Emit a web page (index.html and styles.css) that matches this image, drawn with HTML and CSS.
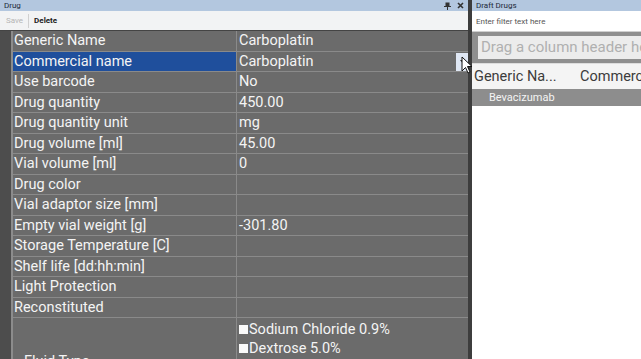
FILE: index.html
```html
<!DOCTYPE html>
<html lang="en">
<head>
    <meta charset="UTF-8">
    <title>Drug</title>
    <link rel="stylesheet" href="styles.css">
</head>
<body>
    <div class="app">
        <div class="drug-pane">
            <div class="pane-title">
                <span>Drug</span>
                <span class="pane-icons">
                    <svg width="7" height="8" viewBox="0 0 7 8"><rect x="1.5" y="0.5" width="4" height="4" fill="#333"/><rect x="0" y="4" width="7" height="1" fill="#333"/><rect x="3" y="5" width="1" height="3" fill="#333"/></svg>
                    <svg width="7" height="7" viewBox="0 0 7 7"><path d="M1 1L6 6M6 1L1 6" stroke="#333" stroke-width="1.6"/></svg>
                </span>
            </div>
            <div class="toolbar">
                <span class="tool disabled">Save</span>
                <span class="tool-sep"></span>
                <span class="tool">Delete</span>
            </div>
            <div class="grid">
                <div class="gutter"></div>
                <div class="rows">
                    <div class="row"><div class="name">Generic Name</div><div class="value">Carboplatin</div></div>
                    <div class="row selected"><div class="name">Commercial name</div><div class="value">Carboplatin<span class="drop-btn"><svg width="5" height="3" viewBox="0 0 5 3"><path d="M0 0H5L2.5 3Z" fill="#333"/></svg></span></div></div>
                    <div class="row"><div class="name">Use barcode</div><div class="value">No</div></div>
                    <div class="row"><div class="name">Drug quantity</div><div class="value">450.00</div></div>
                    <div class="row"><div class="name">Drug quantity unit</div><div class="value">mg</div></div>
                    <div class="row"><div class="name">Drug volume [ml]</div><div class="value">45.00</div></div>
                    <div class="row"><div class="name">Vial volume [ml]</div><div class="value">0</div></div>
                    <div class="row"><div class="name">Drug color</div><div class="value"></div></div>
                    <div class="row"><div class="name">Vial adaptor size [mm]</div><div class="value"></div></div>
                    <div class="row"><div class="name">Empty vial weight [g]</div><div class="value">-301.80</div></div>
                    <div class="row"><div class="name">Storage Temperature [C]</div><div class="value"></div></div>
                    <div class="row"><div class="name">Shelf life [dd:hh:min]</div><div class="value"></div></div>
                    <div class="row"><div class="name">Light Protection</div><div class="value"></div></div>
                    <div class="row"><div class="name">Reconstituted</div><div class="value"></div></div>
                    <div class="row tall">
                        <div class="name"><span class="tall-label">Fluid Type</span></div>
                        <div class="value checks">
                            <div class="check"><span class="box"></span>Sodium Chloride 0.9%</div>
                            <div class="check"><span class="box"></span>Dextrose 5.0%</div>
                            <div class="check"><span class="box"></span>Lactated Ringer</div>
                        </div>
                    </div>
                </div>
            </div>
            <svg class="cursor" width="12" height="18" viewBox="0 0 12 18"><path d="M1 1V15L4.5 11.5L7 17L9 16L6.5 10.5H11Z" fill="#fff" stroke="#111" stroke-width="1"/></svg>
        </div>
        <div class="splitter"></div>
        <div class="draft-pane">
            <div class="pane-title">Draft Drugs</div>
            <div class="filter">Enter filter text here</div>
            <div class="group-panel">
                <div class="group-box">Drag a column header here to group by that column</div>
            </div>
            <div class="col-header">
                <span class="col col-generic">Generic Na...</span>
                <span class="col">Commercial name</span>
            </div>
            <div class="draft-row">Bevacizumab</div>
        </div>
    </div>
</body>
</html>
```

FILE: styles.css
```css
body {
    margin: 0;
    width: 641px;
    height: 359px;
    overflow: hidden;
    font-family: Roboto, "Liberation Sans", sans-serif;
    background-color: #ffffff;
}
.app {
    display: flex;
    height: 359px;
}
.drug-pane {
    position: relative;
    width: 468px;
    display: flex;
    flex-direction: column;
    background-color: #6b6b6b;
}
.pane-title {
    height: 11px;
    flex-shrink: 0;
    display: flex;
    justify-content: space-between;
    align-items: center;
    padding: 0 4px;
    font-size: 8px;
    color: #1e2a3a;
    background-color: #b3c7df;
}
.pane-icons {
    display: flex;
    gap: 6px;
    align-items: center;
}
.toolbar {
    height: 19px;
    flex-shrink: 0;
    display: flex;
    align-items: center;
    gap: 5px;
    padding: 0 6px;
    font-size: 8px;
    font-weight: bold;
    color: #222;
    background-color: #f2f3f4;
    border-bottom: 1px solid #444;
}
.tool.disabled {
    color: #b5b5b5;
    font-weight: normal;
}
.tool-sep {
    width: 1px;
    height: 14px;
    background-color: #d0d0d0;
}
.grid {
    flex: 1;
    display: flex;
    overflow: hidden;
}
.gutter {
    width: 11px;
    background-color: #4d4d4d;
    border-right: 2px solid #8c8c8c;
}
.rows {
    flex: 1;
    display: flex;
    flex-direction: column;
}
.row {
    height: 19.5px;
    flex-shrink: 0;
    display: flex;
    border-bottom: 1px solid #8a8a8a;
    font-size: 14.5px;
    color: #f4f4f4;
    line-height: 20px;
}
.name {
    width: 222px;
    padding-left: 1px;
    border-right: 1px solid #8a8a8a;
    white-space: nowrap;
}
.value {
    flex: 1;
    position: relative;
    padding-left: 2px;
}
.row.selected .name {
    background-color: #1f4f9c;
}
.drop-btn {
    position: absolute;
    right: 0;
    top: 1px;
    width: 12px;
    height: 18px;
    display: flex;
    align-items: center;
    justify-content: center;
    background-color: #dfe7f4;
}
.row.tall {
    height: 80px;
    border-bottom: none;
}
.tall-label {
    display: block;
    padding-top: 34px;
    padding-left: 10px;
}
.checks {
    padding-top: 2px;
}
.check {
    display: flex;
    align-items: center;
    height: 19px;
}
.box {
    width: 9px;
    height: 9px;
    margin-right: 1px;
    background-color: #fafafa;
}
.cursor {
    position: absolute;
    left: 461px;
    top: 56px;
}
.splitter {
    width: 4px;
    background-color: #3d3d3d;
}
.draft-pane {
    flex: 1;
    display: flex;
    flex-direction: column;
    overflow: hidden;
    background-color: #ffffff;
}
.draft-pane .pane-title {
    color: #1e2a3a;
    justify-content: flex-start;
}
.filter {
    height: 20px;
    flex-shrink: 0;
    line-height: 22px;
    padding-left: 4px;
    font-size: 8px;
    color: #555;
    background-color: #ffffff;
    border-bottom: 1px solid #cfcfcf;
}
.group-panel {
    height: 31px;
    flex-shrink: 0;
    padding: 4px 0 4px 6px;
    box-sizing: border-box;
    background-color: #8f8f8f;
}
.group-box {
    height: 23px;
    line-height: 23px;
    padding-left: 3px;
    font-size: 15px;
    color: #b0b0b0;
    white-space: nowrap;
    background-color: #ececec;
}
.col-header {
    height: 25px;
    flex-shrink: 0;
    display: flex;
    align-items: center;
    font-size: 14.5px;
    color: #3c3c3c;
    white-space: nowrap;
    background-color: #f4f4f4;
    border-top: 1px solid #ddd;
}
.col {
    flex-shrink: 0;
}
.col-generic {
    width: 106px;
    padding-left: 2px;
}
.draft-row {
    height: 17px;
    flex-shrink: 0;
    line-height: 17px;
    padding-left: 17px;
    font-size: 11px;
    color: #f4f4f4;
    background-color: #8d8d8d;
}
```
